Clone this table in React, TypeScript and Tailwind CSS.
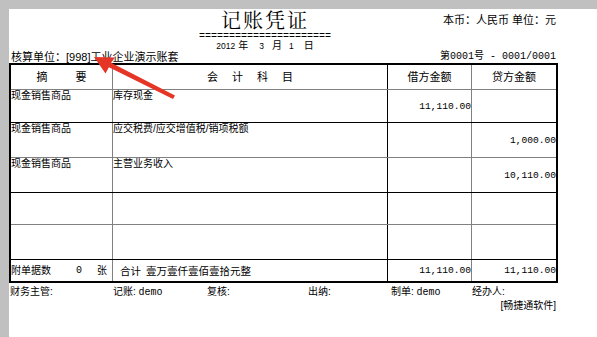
import React from "react";

const sans = "font-['Liberation_Sans','Noto_Sans_CJK_SC',sans-serif]";
const mono = "font-['Liberation_Mono','Noto_Sans_CJK_SC',monospace]";

const rows = [
  { summary: "现金销售商品", subject: "库存现金", debit: "11,110.00", credit: "", row: "h-[33px] border-b border-black" },
  { summary: "现金销售商品", subject: "应交税费/应交增值税/销项税额", debit: "", credit: "1,000.00", row: "h-[35px] border-b border-[#808080]" },
  { summary: "现金销售商品", subject: "主营业务收入", debit: "", credit: "10,110.00", row: "h-[35px] border-b border-black" },
  { summary: "", subject: "", debit: "", credit: "", row: "h-[32px] border-b border-[#808080]" },
  { summary: "", subject: "", debit: "", credit: "", row: "h-[35px] border-b border-black" },
];

export default function App() {
  return (
    <div className={`relative min-h-screen w-full bg-[#c0c0c0] pl-[9px] pt-[9px] text-black ${sans}`}>
      <div className="min-h-[328px] bg-white">
        {/* Title */}
        <div className="flex h-[42px] w-[549px]">
          <div className="w-[186px]" />
          <div className="flex w-[140px] flex-col items-center">
            <div className="h-[22px] text-[20px] leading-[22px] tracking-[2px] font-['Noto_Serif_CJK_SC','Noto_Sans_CJK_SC',serif]">
              记账凭证
            </div>
            <div className={`h-[10px] text-[10px] leading-[10px] pt-[1px] ${mono}`}>======================</div>
            <div className="flex h-[10px] items-center text-[10px] leading-[10px]">
              <span className="text-[8.5px]">2012</span>
              <span className="ml-[3px]">年</span>
              <span className="ml-[11px] text-[8.5px]">3</span>
              <span className="ml-[8px]">月</span>
              <span className="ml-[7px] text-[8.5px]">1</span>
              <span className="ml-[10px]">日</span>
            </div>
          </div>
          <div className="flex-1 pr-[2px] pt-[5px] text-right text-[11px] leading-[12px]">本币：人民币 单位：元</div>
        </div>

        <div className="flex h-[12px] w-[549px] items-end justify-between">
          <div className="pl-[2px] text-[11px] leading-[12px]">核算单位：[998]工业企业演示账套</div>
          <div className={`pr-[2px] text-[10px] leading-[12px] ${mono}`}>第0001号 - 0001/0001</div>
        </div>

        {/* Voucher table */}
        <div className="w-[549px] border-2 border-black">
          <div className="flex h-[25px] border-b border-[#808080] text-[11px]">
            <div className="flex w-[102px] items-center justify-center gap-[28px] border-r border-[#808080]">
              <span>摘</span>
              <span>要</span>
            </div>
            <div className="flex w-[275px] items-center justify-center gap-[14px] border-r border-black">
              <span>会</span>
              <span>计</span>
              <span>科</span>
              <span>目</span>
            </div>
            <div className="flex w-[84px] items-center justify-center border-r border-[#808080]">借方金额</div>
            <div className="flex flex-1 items-center justify-center">贷方金额</div>
          </div>

          {rows.map((r, i) => (
            <div key={i} className={`flex ${r.row} text-[10px] leading-[11px]`}>
              <div className="w-[102px] border-r border-[#808080]">{r.summary}</div>
              <div className="w-[275px] border-r border-black">{r.subject}</div>
              <div className={`flex w-[84px] items-center justify-end border-r border-[#808080] text-[9.6px] ${mono}`}>
                {r.debit}
              </div>
              <div className={`flex flex-1 items-center justify-end text-[9.6px] ${mono}`}>{r.credit}</div>
            </div>
          ))}

          <div className="flex h-[21px] text-[10px] leading-[12px]">
            <div className="flex w-[102px] items-center border-r border-[#808080]">
              <span>附单据数</span>
              <span className={`ml-[25px] ${mono}`}>0</span>
              <span className="ml-[15px]">张</span>
            </div>
            <div className="flex w-[275px] items-center border-r border-black pl-[7px] text-[10.5px]">
              <span>合计</span>
              <span className="ml-[5px]">壹万壹仟壹佰壹拾元整</span>
            </div>
            <div className={`flex w-[84px] items-center justify-end border-r border-[#808080] text-[9.6px] ${mono}`}>
              11,110.00
            </div>
            <div className={`flex flex-1 items-center justify-end text-[9.6px] ${mono}`}>11,110.00</div>
          </div>
        </div>

        {/* Signatures */}
        <div className="flex h-[18px] items-center pl-[1px] text-[10px] leading-[12px]">
          <div className="w-[103px]">财务主管:</div>
          <div className="w-[94px]">
            记账: <span className={mono}>demo</span>
          </div>
          <div className="w-[101px]">复核:</div>
          <div className="w-[83px]">出纳:</div>
          <div className="w-[81px]">
            制单: <span className={mono}>demo</span>
          </div>
          <div>经办人:</div>
        </div>
        <div className="h-[10px] w-[549px] pr-[2px] text-right text-[10px] leading-[10px]">[畅捷通软件]</div>
      </div>

      {/* annotation arrow */}
      <svg className="pointer-events-none absolute left-0 top-0" width="597" height="337">
        <polygon
          points="94,57 115,57.5 111.1,62.8 175,95.5 173,99 108.9,67.2 105.5,73.5"
          fill="#e53527"
        />
      </svg>
    </div>
  );
}
